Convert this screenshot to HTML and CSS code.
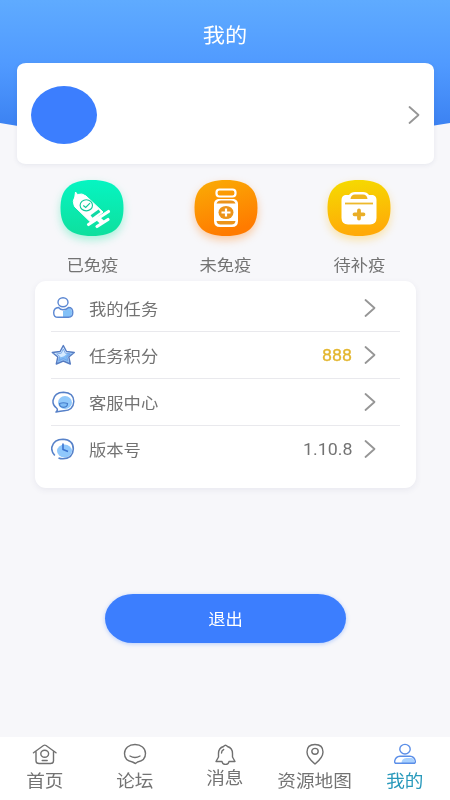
FILE: index.html
```html
<!DOCTYPE html>
<html lang="zh-CN">
<head>
<meta charset="utf-8">
<meta name="viewport" content="width=device-width">
<title>我的</title>
<link rel="stylesheet" href="styles.css">
</head>
<body>
<div class="screen">
  <header class="hero">
    <svg class="hero-bg" width="450" height="145" viewBox="0 0 450 145">
      <defs><linearGradient id="sky" x1="0" y1="0" x2="0" y2="1"><stop offset="0" stop-color="#5fabff"/><stop offset=".45" stop-color="#509aff"/><stop offset=".88" stop-color="#3c82f2"/></linearGradient></defs>
      <path d="M0 0H450V123Q225 163 0 123Z" fill="url(#sky)"/>
    </svg>
    <h1 class="title"><span class="wide">我的</span></h1>
  </header>

  <main class="content">
    <section class="profile">
      <div class="avatar"></div>
      <svg class="chevron" width="12" height="20" viewBox="0 0 12 20"><path d="M1.500 2L10.500 10L1.500 18"/></svg>
    </section>

    <nav class="stats">
      <a class="stat">
        <svg class="badge green" width="64" height="58" viewBox="0 0 64 58">
          <defs><linearGradient id="g1" x1="0" y1="0" x2="0" y2="1"><stop offset="0" stop-color="#06f5c2"/><stop offset="1" stop-color="#0edf9d"/></linearGradient></defs>
          <path d="M32 1C54 1 63.500 10 63.500 29S54 57 32 57S.5 48 .5 29S10 1 32 1Z" fill="url(#g1)"/>
          <path d="M15.500 13L17.500 15.500Q22 13.800 26 17L43 33L31 43.500L14.500 27.500Q12 22 14.800 18Z" fill="#fff" stroke="#fff" stroke-width="1" stroke-linejoin="round"/>
          <path d="M28.500 45.500L48.500 32.500M37 47.500L48 40.500" fill="none" stroke="#fff" stroke-width="3.200" stroke-linecap="round"/>
          <path d="M38.500 40L43 44" fill="none" stroke="#fff" stroke-width="5"/>
          <path d="M31.500 37.500L39.500 31.800" stroke="#10d9a5" stroke-width="3.200"/>
          <ellipse cx="26.300" cy="26.300" rx="6.200" ry="5.600" fill="none" stroke="#10c99a" stroke-width="1.100"/>
          <path d="M23.300 26.500L25.700 28.500L30 24.200" fill="none" stroke="#10c99a" stroke-width="1.200"/>
        </svg>
        <span class="wide">已免疫</span>
      </a>
      <a class="stat">
        <svg class="badge orange" width="64" height="58" viewBox="0 0 64 58">
          <defs><linearGradient id="g2" x1="0" y1="0" x2=".35" y2="1"><stop offset="0" stop-color="#faad05"/><stop offset="1" stop-color="#ff7b00"/></linearGradient></defs>
          <path d="M32 1C54 1 63.500 10 63.500 29S54 57 32 57S.5 48 .5 29S10 1 32 1Z" fill="url(#g2)"/>
          <rect x="22.500" y="10.500" width="19" height="7" rx="3" fill="none" stroke="#fff" stroke-width="2.200"/>
          <path d="M24 20H40Q44 21 44 25V42Q44 48 38 48H26Q20 48 20 42V25Q20 21 24 20Z" fill="#fff"/>
          <path d="M22.500 24.500Q23.500 21.500 27 21.500H37Q40.500 21.500 41.500 24.500ZM22.500 42H41.500Q41 45.500 37.500 45.500H26.500Q23 45.500 22.500 42Z" fill="#ec941a"/>
          <ellipse cx="32" cy="33.500" rx="7.500" ry="6.600" fill="#ec941a"/>
          <path d="M32 29.500V37.500M27.500 33.500H36.500" stroke="#fff" stroke-width="2.200"/>
        </svg>
        <span class="wide">未免疫</span>
      </a>
      <a class="stat">
        <svg class="badge yellow" width="64" height="58" viewBox="0 0 64 58">
          <defs><linearGradient id="g3" x1="0" y1="0" x2=".15" y2="1"><stop offset="0" stop-color="#f5dc00"/><stop offset="1" stop-color="#ffaa08"/></linearGradient></defs>
          <path d="M32 1C54 1 63.500 10 63.500 29S54 57 32 57S.5 48 .5 29S10 1 32 1Z" fill="url(#g3)"/>
          <path d="M18 16H22Q24 13 28 13H36Q40 13 42 16H46Q49.500 17 49.500 21V39Q49.500 45 43 45.500H21Q14.500 45 14.500 39V21Q14.500 17 18 16Z" fill="#fff"/>
          <path d="M23.500 20Q24 15.500 28 15.500H36Q40 15.500 40.500 20Z" fill="#f0b51d"/>
          <path d="M18 24.500H46" stroke="#edb92c" stroke-width="1.800"/>
          <path d="M32 31.500V39.500M27.500 35.300H36.500" stroke="#e9ae27" stroke-width="3.800" stroke-linecap="round"/>
        </svg>
        <span class="wide">待补疫</span>
      </a>
    </nav>

    <section class="menu">
      <a class="row">
        <svg class="icon" width="24" height="22" viewBox="0 0 24 22"><path d="M12 14Q15 13.500 17 11Q20.500 11 21 15Q21 20 18 20H12Z" fill="#83c1f8"/><g fill="none" stroke="#5b87d2" stroke-width="1.400"><ellipse cx="12" cy="5.300" rx="5" ry="4.500"/><path d="M7.500 10.500Q2.700 11 2.700 15.700Q2.700 20.300 7 20.300H17.500Q21.800 20 21.800 15.500Q21.800 10.500 17.500 10.500Q15.500 12.800 12 12.800Q9.500 12.800 7.500 10.500Z"/></g></svg>
        <span class="label wide">我的任务</span>
        <svg class="chevron" width="12" height="20" viewBox="0 0 12 20"><path d="M1.500 2L10.500 10L1.500 18"/></svg>
      </a>
      <a class="row">
        <svg class="icon" width="24" height="22" viewBox="0 0 24 22"><path d="M12.300 1.500L15.500 7.500L23.300 8.500L17.800 13L19.300 20L12.300 17L5.300 20L6.800 13L1.300 8.500L9.100 7.500Z" fill="#d5eaff"/><path d="M16.500 9L21.500 9.500L16.500 13L18 18.500L12.300 16L6.500 18.500L8 13.500Q14 13 16.500 9Z" fill="#7fbaf6"/><path d="M12.300 1.500L15.500 7.500L23.300 8.500L17.800 13L19.300 20L12.300 17L5.300 20L6.800 13L1.300 8.500L9.100 7.500Z" fill="none" stroke="#557cc2" stroke-width="1.400" stroke-linejoin="round"/><path d="M12.300 5L14.300 9.200L19 10L15.800 12.500L16.800 16.500L12.300 14.500L7.800 16.500L8.800 12.500L5.600 10L10.300 9.200Z" fill="none" stroke="#6fa0e4" stroke-width=".8"/></svg>
        <span class="label wide">任务积分</span>
        <span class="value points">888</span>
        <svg class="chevron" width="12" height="20" viewBox="0 0 12 20"><path d="M1.500 2L10.500 10L1.500 18"/></svg>
      </a>
      <a class="row">
        <svg class="icon" width="24" height="22" viewBox="0 0 24 22"><ellipse cx="14" cy="11.500" rx="7" ry="6.500" fill="#91c9fb"/><path d="M5.500 17Q1.500 14 2 9.500Q3.500 1.300 12.500 1.300Q22.800 1.800 22.800 10.500Q22.300 19.300 13 19.800Q9.500 20 5 21Q7.500 18.800 5.500 17Z" fill="none" stroke="#5680c8" stroke-width="1.500" stroke-linejoin="round"/><path d="M8.500 12.500Q12.500 11 16.500 12.500Q16.500 16.300 12.500 16.300Q8.500 16.300 8.500 12.500Z" fill="#80bdf6" stroke="#467ecb" stroke-width="1.200"/></svg>
        <span class="label wide">客服中心</span>
        <svg class="chevron" width="12" height="20" viewBox="0 0 12 20"><path d="M1.500 2L10.500 10L1.500 18"/></svg>
      </a>
      <a class="row">
        <svg class="icon" width="24" height="22" viewBox="0 0 24 22"><ellipse cx="13.500" cy="13" rx="7.500" ry="6.500" fill="#90c8fc"/><path d="M3.800 17.500Q0 13.500 .9 9Q3 1.300 12 1.300Q22.300 1.800 22.300 11Q22 20.300 12 20.800Q9.500 20.800 7.500 20" fill="none" stroke="#5782c9" stroke-width="1.600"/><path d="M12 5.500V11.500L17 13.500" fill="none" stroke="#3b73cf" stroke-width="1.600"/></svg>
        <span class="label wide">版本号</span>
        <span class="value">1.10.8</span>
        <svg class="chevron" width="12" height="20" viewBox="0 0 12 20"><path d="M1.500 2L10.500 10L1.500 18"/></svg>
      </a>
    </section>

    <button class="logout"><span class="wide">退出</span></button>
  </main>

  <nav class="tabs">
    <a class="tab">
      <svg width="26" height="22" viewBox="0 0 26 22"><path d="M1.500 9.800L11.500 2.500Q12.700 1.700 14 2.500L24 9.800M4 8.500V18Q4 20.500 7 20.500H18.500Q21.500 20.500 21.500 18V8.500"/><ellipse cx="12.700" cy="10.800" rx="3.900" ry="3.500"/><path d="M10.200 17.500H15.200"/></svg>
      <span class="wide">首页</span>
    </a>
    <a class="tab">
      <svg width="26" height="22" viewBox="0 0 26 22"><path d="M10.500 19C4.500 18 2.500 14.500 2.500 10.500C2.500 5 7 1.500 13 1.500S23.500 5 23.500 10.500C23.500 14.500 21.500 18 15.500 19L13.500 20.500ZM8 13Q13 16 18 13"/></svg>
      <span class="wide">论坛</span>
    </a>
    <a class="tab raised">
      <svg width="26" height="22" viewBox="0 0 26 22"><path d="M11.500 3.500Q13.500 1 15.500 3.500Q20.500 5 20.500 10.500V14L23 18.500H17Q16.500 21.500 13.500 21.500T10 18.500H4L6.500 14V10.500Q6.500 5 11.500 3.500ZM9.500 10Q9.500 7.500 11.700 6.500"/></svg>
      <span class="wide">消息</span>
    </a>
    <a class="tab">
      <svg width="26" height="22" viewBox="0 0 26 22"><path d="M13 21Q5 14.500 5 9Q5 1.500 13 1.500T21 9Q21 14.500 13 21Z"/><ellipse cx="13" cy="8.300" rx="3.200" ry="2.900"/></svg>
      <span class="wide">资源地图</span>
    </a>
    <a class="tab active">
      <svg width="26" height="22" viewBox="0 0 26 22"><path class="tint" d="M9.500 20Q9.500 15.500 14.500 15H20Q22.500 16 22.500 20Z"/><ellipse cx="13" cy="6.200" rx="5.200" ry="4.800"/><path d="M8 13.200H18Q22.500 13.500 23.300 18Q23.700 20.300 21.500 20.300H4.500Q2.300 20.300 2.700 18Q3.500 13.500 8 13.200Z"/></svg>
      <span class="wide">我的</span>
    </a>
  </nav>
</div>
</body>
</html>
```
FILE: styles.css
```css
* { box-sizing: border-box; }

body {
  margin: 0;
  background: #f7f7fa;
  color: #737373;
  font-family: Roboto, "Noto Sans CJK SC", sans-serif;
}

.screen {
  position: relative;
  display: flex;
  flex-direction: column;
  width: 450px;
  height: 800px;
  overflow: hidden;
}

/* Text is set slightly extended throughout. */
.wide { display: inline-block; transform: scaleX(1.11); white-space: nowrap; }

.hero { height: 63px; padding-top: 20px; }
.hero-bg { position: absolute; top: 0; left: 0; }
.title {
  position: relative;
  margin: 0;
  color: #fff;
  font-size: 20px;
  font-weight: 400;
  line-height: 32px;
  text-align: center;
}

.content { flex: 1; position: relative; }

.profile {
  display: flex;
  align-items: center;
  justify-content: space-between;
  height: 101px;
  margin: 0 16px 0 17px;
  padding: 3px 14px 0;
  border-radius: 9px / 7px;
  background: #fff;
  box-shadow: 0 1px 5px rgba(60, 70, 110, .09);
}
.avatar { width: 66px; height: 58px; border-radius: 50%; background: #3c7efe; }
.chevron { fill: none; stroke: #969696; stroke-width: 1.8; stroke-linecap: round; stroke-linejoin: round; }

.stats { display: flex; justify-content: space-between; padding: 15px 59px 0 60px; }
.stat { display: flex; flex-direction: column; align-items: center; width: 64px; font-size: 15.6px; line-height: 24px; }
.stat .wide { margin-top: 17px; }
.badge { display: block; }
.green { filter: drop-shadow(0 4px 4px rgba(20, 230, 160, .35)); }
.orange { filter: drop-shadow(0 4px 4px rgba(255, 130, 20, .38)); }
.yellow { filter: drop-shadow(0 4px 4px rgba(255, 190, 20, .35)); }

.menu {
  height: 207px;
  margin: 3px 34px 0 35px;
  padding: 4px 16px 0;
  border-radius: 11px;
  background: #fff;
  box-shadow: 0 2px 6px rgba(60, 70, 110, .08);
}
.row {
  display: flex;
  align-items: center;
  height: 47px;
  padding-right: 24px;
  border-bottom: 1px solid #e9e9ed;
  font-size: 15.6px;
}
.row:last-child { height: 46px; border-bottom: 0; }
.label { margin: -1px auto 0 14px; transform-origin: left; }
.value { margin-right: 12px; font-size: 16px; transform: scaleX(1.11); transform-origin: right; }
.points { color: #e3b62f; -webkit-text-stroke: .3px #e3b62f; }

.logout {
  display: block;
  width: 241px;
  height: 49px;
  margin: 106px 0 0 105px;
  padding: 0 0 2px;
  border: 0;
  border-radius: 28px / 24.5px;
  background: #3c7efe;
  box-shadow: 0 1px 4px rgba(60, 126, 254, .35);
  color: #fff;
  font: inherit;
  font-size: 15.6px;
}

.tabs { position: relative; display: flex; height: 63px; background: #fff; }
.tab { display: flex; flex: 1; flex-direction: column; align-items: center; padding-top: 6px; font-size: 16.8px; line-height: 24px; }
.tab svg { flex: none; fill: none; stroke: #707070; stroke-width: 1.4; stroke-linejoin: round; stroke-linecap: round; }
.tab .wide { margin-top: 4px; }
.raised .wide { margin-top: 1px; }
.active { color: #2899bb; }
.active svg { stroke: #5a8ee8; }
.active .tint { fill: #a9d1ff; stroke: none; }
```
